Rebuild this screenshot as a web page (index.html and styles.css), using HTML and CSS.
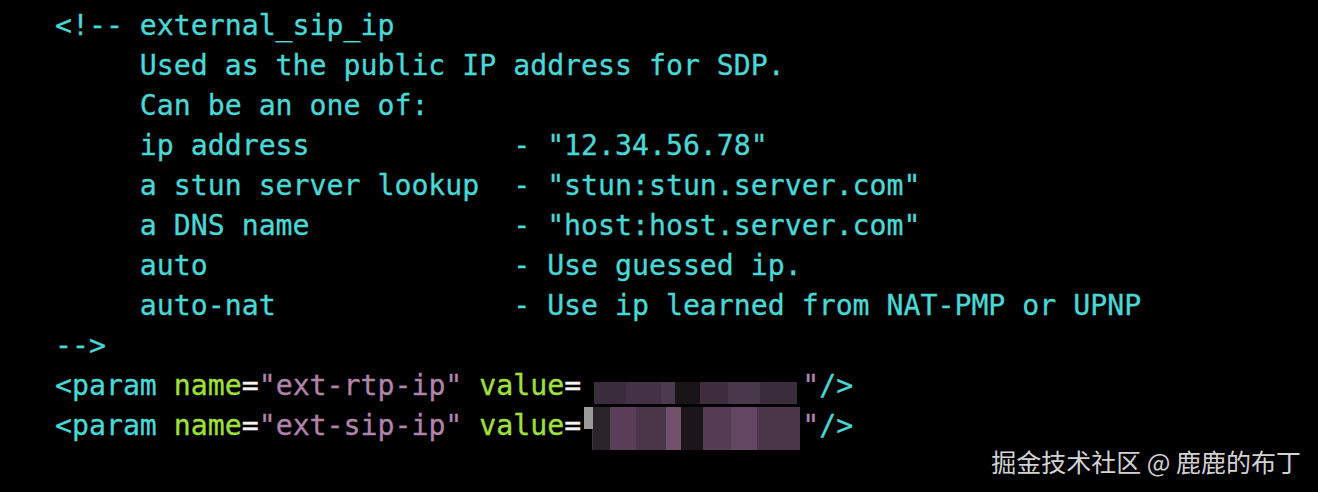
FILE: index.html
```html
<!DOCTYPE html>
<html>
<head>
<meta charset="utf-8">
<link rel="stylesheet" href="styles.css">
</head>
<body>
<div class="screen">
<pre class="code"><span class="c">&lt;!-- external_sip_ip
     Used as the public IP address for SDP.
     Can be an one of:
     ip address            - "12.34.56.78"
     a stun server lookup  - "stun:stun.server.com"
     a DNS name            - "host:host.server.com"
     auto                  - Use guessed ip.
     auto-nat              - Use ip learned from NAT-PMP or UPNP
--&gt;</span>
<span class="c">&lt;param</span> <span class="g">name</span><span class="w">=</span><span class="p">"ext-rtp-ip"</span> <span class="g">value</span><span class="w">=</span><span class="blur blur1"></span><span class="p">"</span><span class="c">/&gt;</span>
<span class="c">&lt;param</span> <span class="g">name</span><span class="w">=</span><span class="p">"ext-sip-ip"</span> <span class="g">value</span><span class="w">=</span><span class="blur blur2"></span><span class="p">"</span><span class="c">/&gt;</span></pre>
<div class="mark">掘金技术社区 @ 鹿鹿的布丁</div>
</div>
</body>
</html>
```
FILE: styles.css
```css
html, body {
  margin: 0;
  padding: 0;
  background: #000;
}
.screen {
  position: relative;
  width: 1318px;
  height: 492px;
  background: #000;
  overflow: hidden;
}
.code {
  margin: 0;
  padding: 6px 0 0 55px;
  font-family: "DejaVu Sans Mono", "Liberation Mono", monospace;
  font-size: 28.2px;
  line-height: 40px;
  color: #4ad8d6;
  -webkit-text-stroke: 0.3px currentColor;
}
.c { color: #4ad8d6; }
.g { color: #a0e03c; }
.w { color: #f4f4f4; }
.p { color: #b084aa; }
.blur {
  display: inline-block;
  position: relative;
  width: 221px;
  height: 1px;
  vertical-align: baseline;
}
.blur::before {
  content: "";
  position: absolute;
  left: 0;
  right: 0;
}
.blur1::before {
  left: 13px;
  right: 5px;
  top: -12px;
  height: 22px;
  background: linear-gradient(90deg,
    #3a2c3c 0 16%, #433245 16% 33%, #4c3a4e 33% 40%, #1a1418 40% 52%, #3e2e40 52% 66%, #4a384c 66% 82%, #3b2c3d 82% 100%);
}
.blur2::before {
  left: 3px;
  right: 2px;
  top: -27px;
  height: 43px;
  background:
    linear-gradient(180deg, transparent 0 50%, #000 50% 100%) 0 0 / 4% 100% no-repeat,
    linear-gradient(90deg, #9a9a9a 0 4%, transparent 4% 100%),
    linear-gradient(90deg,
      #2a2329 4% 12%, #5a3e58 12% 24%, #4b3549 24% 38%, #71506c 38% 45%, #1c161b 45% 55%, #563c53 55% 68%, #634762 68% 80%, #4a3648 80% 100%);
}
.mark {
  position: absolute;
  right: 17px;
  bottom: 16px;
  font-family: "Noto Sans CJK SC", "Noto Sans", sans-serif;
  font-size: 25px;
  line-height: 30px;
  color: #d2d2d2;
}
```
